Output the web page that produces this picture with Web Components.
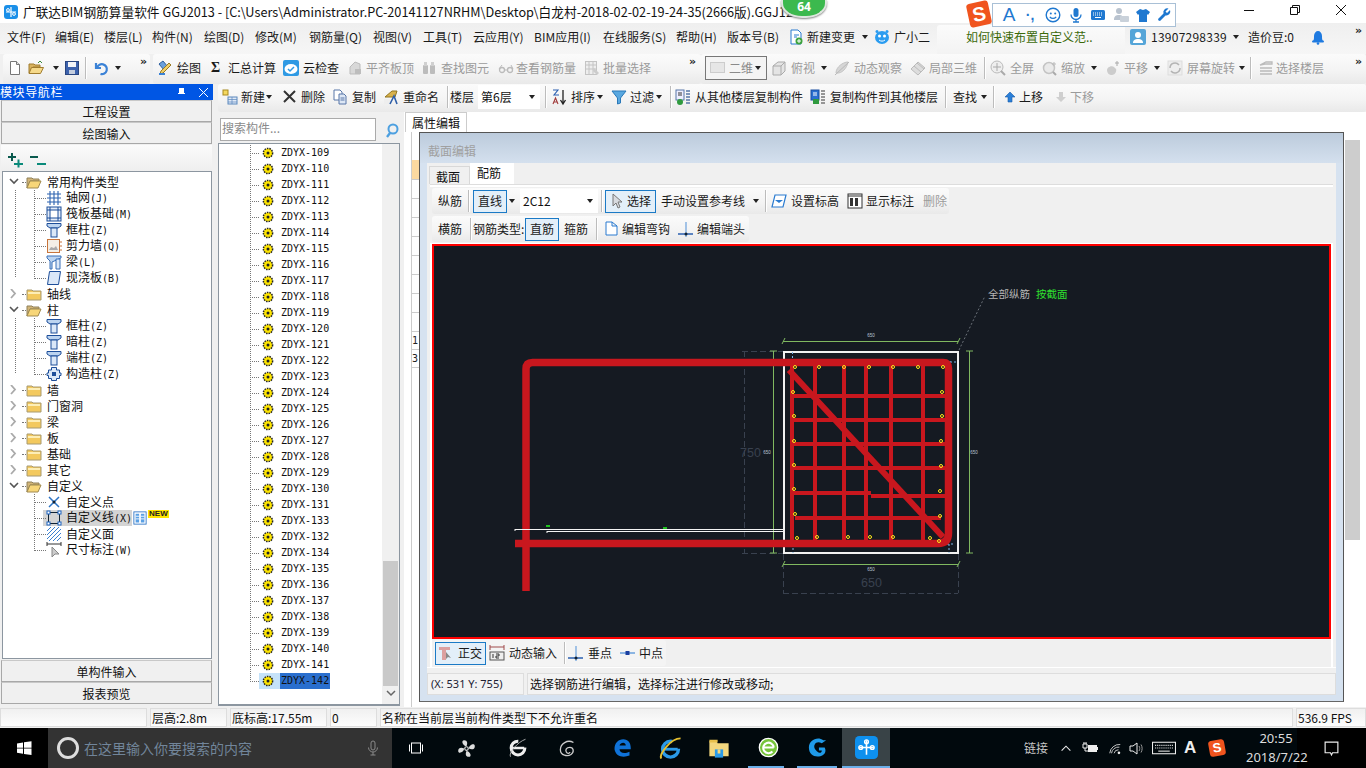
<!DOCTYPE html>
<html lang="zh">
<head>
<meta charset="utf-8">
<title>GGJ2013</title>
<style>
  html, body { margin: 0; height: 100%; overflow: hidden; background: #f0f0f0; }
  body { font: 12px/16px "Noto Sans CJK SC", "Noto Sans", sans-serif; color: #111; }
</style>
</head>
<body>
<gl-app></gl-app>
<script>
const FONT = '"Noto Sans CJK SC", "Noto Sans", sans-serif';
const MONO = '"DejaVu Sans Mono", "Liberation Mono", monospace';

// icons, 16x16 unless a vb is passed
const ICONS = {
  app: '<rect x="1" y="1" width="14" height="14" rx="3" fill="#1a8fe8"/><path d="M8 3v10M3 8h10" stroke="#fff" stroke-width="1.2" fill="none"/><circle cx="5" cy="6" r="1.4" fill="none" stroke="#fff"/><circle cx="11" cy="10" r="1.4" fill="none" stroke="#fff"/>',
  doc: '<path d="M3.5 1.5h6l3 3v10h-9z" fill="#fff" stroke="#777"/><path d="M9.5 1.5v3h3" fill="#ddd" stroke="#777"/>',
  open: '<path d="M1 13V4h5l1 1h5v2H5l-3 6z" fill="#d8b25e" stroke="#a07c2e"/><path d="M3.500 7.500h12l-3 6H1z" fill="#f5d98a" stroke="#a07c2e"/><path d="M10 3l2-2 2 2" fill="none" stroke="#3a8a3a"/>',
  save: '<rect x="1.500" y="1.500" width="13" height="13" fill="#3c62ad" stroke="#29457f"/><rect x="4" y="2" width="8" height="5" fill="#f2f4f8"/><rect x="5" y="10" width="6" height="4" fill="#c5cede"/>',
  undo: '<path d="M3 3v5h5" fill="none" stroke="#3b82d6" stroke-width="2.200"/><path d="M4 8a5 5 0 1 1 3.500 6" fill="none" stroke="#3b82d6" stroke-width="2.200"/>',
  draw: '<path d="M2 4l4-3 5 6-4 3z" fill="#6aa0dc" stroke="#2e5e9e"/><path d="M14 5L6 13l-3 1 1-3 8-8z" fill="#f0cf6a" stroke="#9a7a22"/><path d="M2 14h6" stroke="#3b82d6" stroke-width="2"/>',
  cloud: '<rect x="0" y="0" width="16" height="16" rx="2" fill="#2f9ae4"/><ellipse cx="8" cy="9" rx="6.500" ry="5" fill="#fff"/><path d="M5 9l2 2 4-4" fill="none" stroke="#2f9ae4" stroke-width="1.500"/>',
  gbox: '<path d="M3 14V7l5-5 5 2v10z" fill="#d8d8d8" stroke="#bbb"/><rect x="8" y="9" width="6" height="5" fill="#bdbdbd"/>',
  binoc: '<rect x="2" y="5" width="5" height="9" rx="1" fill="#bcbcbc"/><rect x="9" y="5" width="5" height="9" rx="1" fill="#bcbcbc"/><rect x="3" y="2" width="3" height="4" fill="#d0d0d0"/><rect x="10" y="2" width="3" height="4" fill="#d0d0d0"/>',
  glasses: '<circle cx="4" cy="10" r="2.500" fill="none" stroke="#bbb" stroke-width="1.300"/><circle cx="12" cy="10" r="2.500" fill="none" stroke="#bbb" stroke-width="1.300"/><path d="M6.500 10h3M1 9l3-4M15 9l-2-4" stroke="#bbb" fill="none"/>',
  batch: '<rect x="1.500" y="1.500" width="11" height="13" fill="#eee" stroke="#c4c4c4"/><path d="M1 5h12M1 9h12M5 1v14M9 1v14" stroke="#c4c4c4"/><path d="M10 8l5 5-2 2-4-4z" fill="#ccc"/>',
  cube: '<path d="M2 6l5-4h7v9l-4 4H2z" fill="#e4e4e4" stroke="#aaa"/><path d="M2 6h8v9M10 6l4-4" fill="none" stroke="#aaa"/>',
  orbit: '<path d="M2 13c0-6 7-11 12-11-1 6-6 12-12 11z" fill="#d6d6d6" stroke="#c4c4c4"/><path d="M1 15l14-13" stroke="#b8b8b8"/>',
  part: '<path d="M1 9l7-7 7 6-7 7z" fill="#ddd" stroke="#bbb"/><path d="M4 6l7 6M7 3l7 6" stroke="#bbb"/>',
  zoomfit: '<circle cx="7" cy="7" r="6" fill="#eee" stroke="#bbb"/><path d="M7 3v8M3 7h8" stroke="#aaa"/><path d="M11 11l4 4" stroke="#aaa" stroke-width="2"/>',
  zoom: '<circle cx="7" cy="8" r="5.500" fill="#eaeaea" stroke="#c4c4c4" stroke-width="1.500"/><path d="M11 12l3 3" stroke="#aaa" stroke-width="2"/><path d="M12 2v4M10 4h4" stroke="#bbb"/>',
  pan: '<path d="M2 10c0-3 5-5 7-3l2 2c1 2-1 6-4 6s-5-2-5-5z" fill="#ccc"/><path d="M12 1v5M10 3h4" stroke="#aaa"/>',
  rotate: '<rect x="1" y="1" width="14" height="14" fill="#eee" stroke="#ddd"/><path d="M3 8a5 5 0 0 1 9-3M13 8a5 5 0 0 1-9 3" fill="none" stroke="#b4b4b4" stroke-width="1.500"/>',
  floors: '<path d="M2 5l6-3h6v2H7zM2 8h12M2 11h12M2 14h12" stroke="#bbb" stroke-width="1.300" fill="none"/>',
  chg: '<path d="M3 1h7l3 3v11H3z" fill="#fff" stroke="#2a7bd0"/><path d="M6 6h5M6 8h3" stroke="#2a7bd0"/><circle cx="11" cy="12" r="3.500" fill="#3da33d"/><path d="M11 10v4M9 12h4" stroke="#fff"/>',
  xiao: '<ellipse cx="8" cy="8.500" rx="7" ry="6.500" fill="#2a9cf0"/><circle cx="5.500" cy="7" r="1.500" fill="#fff"/><circle cx="10.500" cy="7" r="1.500" fill="#fff"/><path d="M5 11c2 1.500 4 1.500 6 0" stroke="#fff" fill="none"/><circle cx="3" cy="2.500" r="1.500" fill="#2a9cf0"/><circle cx="13" cy="2.500" r="1.500" fill="#2a9cf0"/>',
  user: '<rect width="16" height="16" rx="2" fill="#55a5d8"/><circle cx="8" cy="6" r="3" fill="#fff"/><path d="M3 14c0-3 2-4 5-4s5 1 5 4z" fill="#fff"/>',
  bell: '<path d="M3 12c1-1 1-3 1-5 0-3 2-5 4-5s4 2 4 5c0 2 0 4 1 5z" fill="#1f7ae0"/><rect x="2" y="11.500" width="12" height="2" rx="1" fill="#1f7ae0"/><circle cx="8" cy="14.500" r="1.300" fill="#1f7ae0"/>',
  newc: '<rect x="1" y="1" width="5" height="5" fill="#f4d860" stroke="#a88a20"/><rect x="6" y="8" width="9" height="7" fill="#dfe9f6" stroke="#5b88bd"/><path d="M6 10.500h9M6 13h9M10 8v7" stroke="#5b88bd" stroke-width=".7"/>',
  del: '<path d="M2 2l11 11M13 2L2 13" stroke="#333" stroke-width="2"/>',
  copy: '<path d="M2 1h6l2 2v8H2z" fill="#fff" stroke="#5877a8"/><path d="M7 5h5l2 2v8H7z" fill="#dde7f5" stroke="#5877a8"/><path d="M8.500 9h4M8.500 11h4" stroke="#5877a8"/>',
  ren: '<path d="M2 8l7-6h5l-2 6z" fill="#d9b24c" stroke="#927620"/><rect x="1" y="10" width="6" height="5" fill="#eee"/><path d="M7 15l4-8 3 8" fill="none" stroke="#2f5fa8" stroke-width="1.600"/>',
  sort: '<path d="M2 1h5L3 6h5" fill="none" stroke="#2b5fb0" stroke-width="1.100"/><path d="M2 15l2.500-6L7 15M3 13h3" fill="none" stroke="#a03a3a" stroke-width="1.100"/><path d="M12 1v13M9.500 11l2.500 4 2.500-4" fill="none" stroke="#222" stroke-width="1.300"/>',
  filter: '<path d="M1 2h14L9.500 9v5l-3 1V9z" fill="#59a8e0" stroke="#2a78b8"/>',
  cfrom: '<rect x="1" y="1" width="8" height="10" fill="#eef" stroke="#5877a8"/><path d="M3 4h4M3 6h4" stroke="#333"/><path d="M11 2h4M11 5h4M11 8h4M11 11h4M11 14h4" stroke="#5877a8" stroke-width="1.300"/><circle cx="5" cy="13" r="3" fill="#2f9a3f"/>',
  cto: '<rect x="1" y="1" width="8" height="10" fill="#2a6fd0" stroke="#1a4f9f"/><path d="M3 4h4M3 6h4" stroke="#fff"/><path d="M11 2h4M11 5h4M11 8h4M11 11h4M11 14h4" stroke="#777" stroke-width="1.300"/><rect x="3" y="10" width="6" height="5" fill="#2f9a3f"/>',
  up: '<path d="M8 3l5 5h-3v5H6V8H3z" fill="#2a7fd8" stroke="#1a5aa8" stroke-width=".6"/>',
  down: '<path d="M6 3h4v5h3l-5 5-5-5h3z" fill="#cfcfcf"/>',
  search: '<circle cx="9" cy="7" r="4.500" fill="none" stroke="#4da0e0" stroke-width="2"/><path d="M6 11l-3 4" stroke="#4da0e0" stroke-width="2.400"/>',
  plus: '<path d="M1 5h8M5 1v8" stroke="#0a5a4e" stroke-width="2"/><path d="M7 12h9M11.500 7.500v8" stroke="#0a8a7a" stroke-width="2"/>',
  minus: '<path d="M0 5h8" stroke="#0a5a4e" stroke-width="2"/><path d="M7 12h9" stroke="#0a8a7a" stroke-width="2"/>',
  fclosed: '<path d="M1 4h5l1 1h8v9H1z" fill="#f3c95e" stroke="#a89a70"/><rect x="2" y="6" width="12" height="2" fill="#fdeeb6"/>',
  fopen: '<path d="M1 14V4h5l1 1h6v2H4z" fill="#d2b578" stroke="#8f8058"/><path d="M4 7h11l-3 7H1z" fill="#f7d679" stroke="#a08a50"/>',
  grid: '<path d="M1 4h14M1 8h14M1 12h14M4 1v14M8 1v14M12 1v14" stroke="#2c62b0" stroke-width="1.100"/>',
  raft: '<rect x="1" y="1" width="14" height="14" fill="#e4ecf8" stroke="#1d4e9a"/><rect x="4" y="4" width="8" height="8" fill="#fff" stroke="#1d4e9a"/><path d="M1 4h3M12 4h3M1 12h3M12 12h3M4 1v3M12 1v3M4 12v3M12 12v3" stroke="#1d4e9a"/>',
  column: '<path d="M1 1.500h14v2.500l-3 2H4l-3-2z" fill="#bcd4f0" stroke="#1d4e9a"/><rect x="5" y="6" width="6" height="9" fill="#dbe8f8" stroke="#1d4e9a"/>',
  wall: '<rect x="1.500" y="1.500" width="12" height="13" fill="#f4efe6" stroke="#c8753c"/><path d="M3 12l2-3 3 1 2-2 2 4z" fill="#aaa"/><path d="M14 4h2M14 8h2M14 12h2" stroke="#c8753c"/>',
  beam: '<path d="M1 2h14v2L6 8v7H4V7L1 4z" fill="#bcd4f0" stroke="#3a70b8"/><path d="M10 5h4v10h-4z" fill="#dbe8f8" stroke="#3a70b8"/>',
  slab: '<path d="M3.500 1.500h11l-2 13h-11z" fill="#dbe8f8" stroke="#1d4e9a"/>',
  cons: '<path d="M5.500 1.500h5v2.500h3v3h1.500v2.500h-1.500v3h-3v2h-5v-2h-3v-3H1V7h1.500V4h3z" fill="#dbe8f8" stroke="#1d4e9a"/><rect x="6" y="6" width="4" height="4" fill="#1d4e9a"/>',
  cpoint: '<path d="M3 3l10 10M13 3L3 13" stroke="#2d74c4" stroke-width="1.500"/><circle cx="8" cy="8" r="1.500" fill="#123"/>',
  cline: '<rect x="2.500" y="2.500" width="11" height="11" fill="none" stroke="#123"/><g fill="#fff" stroke="#1a62c0"><rect x="1" y="1" width="3" height="3"/><rect x="12" y="1" width="3" height="3"/><rect x="1" y="12" width="3" height="3"/><rect x="12" y="12" width="3" height="3"/></g>',
  cface: '<rect x="1" y="1" width="14" height="14" fill="#fff"/><path d="M1 5l4-4M1 9l8-8M1 13L13 1M3 15L15 3M7 15l8-8M11 15l4-4" stroke="#3a7fd0"/>',
  cdim: '<path d="M1 2h14M1 0v4M15 0v4" stroke="#333"/><path d="M6 5v10l3-3h4z" fill="#ccc" stroke="#888"/>',
  cols: '<rect x="1" y="1" width="14" height="14" fill="#fff" stroke="#2d74c4"/><path d="M3 3h4v10H3zM9 3h4v10H9z" fill="#5aa0e4"/><path d="M3 6h4M3 9h4M9 6h4M9 9h4" stroke="#fff"/>',
  cursor: '<path d="M4 1v12l3-3 2 5 2-1-2-5h4z" fill="#d8dbe0" stroke="#777"/>',
  setz: '<path d="M4 2h11l-3 12H1z" fill="#fff" stroke="#2a7bd0" stroke-width="1.200"/><path d="M4 7h8l-4 3z" fill="#2a7bd0"/>',
  show: '<rect x="1" y="1" width="14" height="14" fill="#fff" stroke="#333"/><rect x="3" y="5" width="3" height="8" fill="#333"/><rect x="8" y="5" width="3" height="8" fill="#333"/><path d="M1 3h14" stroke="#333"/>',
  hook: '<path d="M3 1h6v4h5v9H3z" fill="#fff" stroke="#2a7bd0"/><path d="M9 1l5 4" stroke="#2a7bd0"/>',
  endp: '<path d="M1 13h15" stroke="#2a5fb0" stroke-width="1.500"/><path d="M9 1v15" stroke="#6aa0dc" stroke-width="1.200"/><circle cx="9" cy="13" r="1.500" fill="#123"/>',
  midp: '<path d="M1 8h15" stroke="#6aa0dc" stroke-width="1.500"/><rect x="6.500" y="6" width="4" height="4" fill="#1a3fa0"/>',
  ortho: '<path d="M1 2h11v3H8v10H4V5H1z" fill="#dca0a0"/><path d="M8 7v7l2-2 3 1z" fill="#888"/>',
  dyn: '<path d="M1 2h14M1 0v5M15 0v5" stroke="#a04a4a"/><rect x="1" y="7" width="14" height="8" fill="#eee" stroke="#555"/><path d="M4 9v4M7 9h3v2H7v2h3" stroke="#333" fill="none"/>',
  // ime bar
  smile: '<circle cx="8" cy="8" r="6.800" fill="none" stroke="#1f78d0" stroke-width="1.400"/><circle cx="5.800" cy="6.500" r="1" fill="#1f78d0"/><circle cx="10.200" cy="6.500" r="1" fill="#1f78d0"/><path d="M4.800 9.800c1.800 2.200 4.600 2.200 6.400 0" fill="none" stroke="#1f78d0" stroke-width="1.300"/>',
  mic: '<rect x="5.500" y="1" width="5" height="9" rx="2.500" fill="#1f78d0"/><path d="M3 7.500a5 5 0 0 0 10 0M8 12.500v2.500M5 15h6" fill="none" stroke="#1f78d0" stroke-width="1.300"/>',
  kbd: '<rect x="1" y="3" width="14" height="10" rx="1.500" fill="#1f78d0"/><path d="M3 6h10M3 8h10" stroke="#fff" stroke-dasharray="1 1"/><path d="M5 10.500h6" stroke="#fff"/>',
  person: '<circle cx="6" cy="4" r="3" fill="#b9c3cf"/><path d="M1 13c0-4 2-5 5-5s3 1 4 2v3z" fill="#b9c3cf"/><rect x="7" y="9" width="9" height="6" rx="1" fill="#c9d1da"/>',
  shirt: '<path d="M5 2l3 1 3-1 4 3-2 3-1-1v8H4V7L3 8 1 5z" fill="#1f78d0"/>',
  wrench: '<path d="M14 3l-3 3-1.500-1.500 3-3a4 4 0 0 0-5 5L2 12a2 2 0 0 0 2 2l5.500-5.500a4 4 0 0 0 4.500-5.500z" fill="#1f78d0"/>',
  // task bar
  win: '<path d="M1 3.500l6-1v5.200H1zM8 2.300l7.500-1.100v6.500H8zM1 8.500h6v5.200l-6-1zM8 8.500h7.500v6.500L8 13.900z" fill="#fff"/>',
  tview: '<rect x="3.500" y="3" width="9" height="10" fill="none" stroke="#fff"/><path d="M1.500 4.500v7M14.500 4.500v7" stroke="#fff"/>',
  micw: '<rect x="6" y="1" width="4" height="9" rx="2" fill="none" stroke="#8a8a8a"/><path d="M3.500 7.500a4.500 4.500 0 0 0 9 0M8 12v3M5.500 15h5" fill="none" stroke="#8a8a8a"/>',
  fan: '<circle cx="8" cy="8" r="1.500" fill="none" stroke="#ddd"/><path d="M8 6C5 6 3 1 6 1s3 3 2 5zM10 8c0-3 5-5 5-2s-3 3-5 2zM8 10c3 0 5 5 2 5s-3-3-2-5zM6 8c0 3-5 5-5 2s3-3 5-2z" fill="#ddd"/>',
  iew: '<circle cx="8" cy="8" r="5.500" fill="none" stroke="#eee" stroke-width="2.400" stroke-dasharray="26 8"/><path d="M3 8h10" stroke="#eee" stroke-width="2"/><path d="M2 15C0 12 8 3 14 1" fill="none" stroke="#bbb" stroke-width=".7"/>',
  swirl: '<path d="M13 3C8 0 2 4 2 9s6 6 9 4 2-6-1-6-4 2-3 4 3 1 3 0" fill="none" stroke="#ccc" stroke-width="1.100"/>',
  edge: '<path d="M2 9c0-5 3-8 7-8s6 3 6 7v1H6c0 3 4 4 8 2v3c-5 2-11 1-12-5zM6 6h5c0-3-4-3-5 0z" fill="#0f72d8"/>',
  ie: '<circle cx="8" cy="8.500" r="5.500" fill="none" stroke="#2a9ae8" stroke-width="2.400" stroke-dasharray="27 7"/><path d="M3 8.500h10" stroke="#2a9ae8" stroke-width="2"/><path d="M1.500 15C0 12 8 1 15 1" fill="none" stroke="#e6c030" stroke-width="1.300"/>',
  explorer: '<path d="M1 3h5l1 1.500h8V14H1z" fill="#f3d77e"/><rect x="1" y="2" width="6" height="2" fill="#e8c04c"/><path d="M5 9h6v6H5z" fill="#2a9ae8"/><rect x="7" y="9" width="2" height="3" fill="#f3d77e"/>',
  gie: '<circle cx="8" cy="8" r="7" fill="#76c43a" stroke="#fff"/><path d="M4 8h8M12 8a4 4 0 1 0-1 3" fill="none" stroke="#fff" stroke-width="1.600"/>',
  gapp: '<path d="M12 3C8 0 2 3 2 8s4 7 8 6 4-4 3-6H9v2h2c0 2-2 2-3 1S5 8 6 6s3-2 5-1l3-2z" fill="#1f9ae8"/>',
  cross: '<rect x="0" y="0" width="16" height="16" rx="3" fill="#0e90ee"/><path d="M8 3v10M3 8h10" stroke="#fff" stroke-width="1.100"/><circle cx="4" cy="8" r="1.300" fill="none" stroke="#fff"/><circle cx="12" cy="8" r="1.300" fill="none" stroke="#fff"/><circle cx="8" cy="4" r="1.300" fill="none" stroke="#fff"/>',
  caret: '<path d="M3 11l5-5 5 5" fill="none" stroke="#eee" stroke-width="1.200"/>',
  batt: '<path d="M1 4h4v4H1zM2 2v2M4 2v2M3 8v3h3" stroke="#eee" fill="none"/><rect x="6" y="5" width="9" height="7" fill="#eee"/><rect x="15" y="7" width="1" height="3" fill="#eee"/>',
  wifi: '<path d="M2 14a11 11 0 0 1 12-10M4 14a8 8 0 0 1 9-7M7 14a5 5 0 0 1 5-4" fill="none" stroke="#ddd"/><circle cx="12.500" cy="13.500" r="1.500" fill="#eee"/>',
  vol: '<path d="M2 6h3l4-3v11L5 11H2z" fill="none" stroke="#eee"/><path d="M11 6c1 1.500 1 3.500 0 5M13 4.500c1.500 2.500 1.500 5.500 0 8" fill="none" stroke="#999"/>',
  kbw: '<rect x=".5" y="2.500" width="22" height="11" fill="none" stroke="#eee"/><path d="M3 5.500h17M3 8h17" stroke="#eee" stroke-dasharray="1 1"/><path d="M6 11h11" stroke="#eee"/>',
  note: '<path d="M2 2h12v10H9l-1 2-1-2H2z" fill="none" stroke="#eee" stroke-width="1.100"/>'
};

class GlIcon extends HTMLElement {
  connectedCallback() {
    const s = this.getAttribute('s') || 16;
    const h = this.getAttribute('h') || s;
    const vb = this.getAttribute('vb') || '0 0 16 16';
    const root = this.shadowRoot || this.attachShadow({ mode: 'open' });
    root.innerHTML = `<style>:host{display:inline-block;width:${s}px;height:${h}px;flex:none;line-height:0}svg{display:block;overflow:visible}</style>
      <svg width="${s}" height="${h}" viewBox="${vb}">${ICONS[this.getAttribute('name')] || ''}</svg>`;
  }
}

// one toolbar item: optional icon, then the label in the slot
class GlTool extends HTMLElement {
  connectedCallback() {
    const icon = this.getAttribute('icon');
    const iw = this.getAttribute('iw') || 0;
    const root = this.shadowRoot || this.attachShadow({ mode: 'open' });
    root.innerHTML = `<style>
      :host{display:inline-flex;align-items:center;height:100%;flex:none;box-sizing:border-box;white-space:nowrap;color:#1a1a1a;overflow:visible}
      :host([off]){color:#9b9b9b}
      :host([on]){height:23px;background:#e3eff9;outline:1px solid #1b7ac6;outline-offset:-1px}
      .i{width:${iw}px;flex:none;display:flex;align-items:center}
    </style>${icon ? `<span class="i"><gl-icon name="${icon}"></gl-icon></span>` : ''}<slot></slot>`;
  }
}

const DROP = '<span style="display:block;width:0;height:0;border:3px solid transparent;border-top:4px solid #222;border-bottom:0"></span>';
const MORE = '<span style="font:bold 11px/10px \'DejaVu Sans\',sans-serif;letter-spacing:-1px;color:#222;position:relative;top:-6px">»</span>';

// items are [x, kind or icon, labelX, label, flags]; the flow widths come from the next x
function bar(start, end, items) {
  let html = '';
  items.forEach((it, i) => {
    const x = it[0];
    const next = i + 1 < items.length ? items[i + 1][0] : end;
    const w = next - x;
    const kind = it[1];
    const first = i === 0 ? `margin-left:${x - start}px;` : '';
    if (kind === 'sep') {
      html += `<span style="${first}width:${w}px;flex:none;display:flex;align-items:center"><span style="width:1px;height:22px;background:#bcbcbc;box-shadow:1px 0 #fff"></span></span>`;
    } else if (kind === 'drop') {
      html += `<span style="${first}width:${w}px;flex:none;display:flex;align-items:center">${DROP}</span>`;
    } else if (kind === 'more') {
      html += `<span style="${first}width:${w}px;flex:none;display:flex;align-items:center">${MORE}</span>`;
    } else if (kind === 'sigma') {
      html += `<gl-tool style="${first}width:${w}px"><span style="width:${it[2] - x}px;font:bold 14px 'Liberation Serif',serif;flex:none">Σ</span>${it[3]}</gl-tool>`;
    } else if (kind === 'combo') {
      const cw = it[4];
      html += `<span style="${first}width:${cw}px;margin-right:${w - cw}px;height:${it[5] || 24}px;flex:none;background:#fff;display:flex;align-items:center;justify-content:space-between;padding:0 5px 0 3px;box-sizing:border-box;white-space:nowrap;${it[6] || ''}">${it[3]}${DROP}</span>`;
    } else {
      const f = it[4] || '';
      const bw = it[5];
      const pad = it[6] ? `padding-left:${it[6]}px;` : '';
      const size = bw ? `width:${bw}px;margin-right:${w - bw}px;` : `width:${w}px;`;
      const attr = kind ? `icon="${kind}" iw="${it[2] - x - (it[6] || 0)}"` : '';
      html += `<gl-tool ${attr} ${f} style="${first}${size}${pad}">${it[3] || ''}</gl-tool>`;
    }
  });
  return html;
}

class GlSeg extends HTMLElement {
  connectedCallback() {
    const root = this.shadowRoot || this.attachShadow({ mode: 'open' });
    root.innerHTML = `<style>
      :host{display:flex;align-items:center;flex:none;box-sizing:border-box;height:100%;overflow:visible;
        background:linear-gradient(#fbfbfb,#f4f4f4 55%,#e9e9e9);border-radius:3px}
    </style><slot></slot>`;
  }
}

class GlTitlebar extends HTMLElement {
  constructor() {
    super();
    this.attachShadow({ mode: 'open' }).innerHTML = `<style>
      :host{display:flex;align-items:center;height:23px;background:#fff;position:relative;font-size:12.7px}
      .t{margin-left:4px;white-space:nowrap;color:#111;line-height:24px}
      .w{position:absolute;top:0;right:2px;display:flex}
      .w span{width:46px;height:20px;display:flex;align-items:center;justify-content:center}
    </style>
    <gl-icon name="app" s="16" style="margin-left:3px"></gl-icon>
    <span class="t">广联达BIM钢筋算量软件 GGJ2013 - [C:\\Users\\Administrator.PC-20141127NRHM\\Desktop\\白龙村-2018-02-02-19-24-35(2666版).GGJ12</span>
    <div class="w">
      <span><svg width="10" height="10"><path d="M0 5.500h10" stroke="#111"/></svg></span>
      <span><svg width="10" height="10"><path d="M.5 2.500h7v7h-7zM2.500 2.500v-2h7v7h-2" fill="none" stroke="#111"/></svg></span>
      <span><svg width="10" height="10"><path d="M0 0l10 10M10 0L0 10" stroke="#111"/></svg></span>
    </div>`;
  }
}

class GlMenubar extends HTMLElement {
  constructor() {
    super();
    const m = [[7,'文件(F)'],[55,'编辑(E)'],[104,'楼层(L)'],[152,'构件(N)'],[204,'绘图(D)'],[255,'修改(M)'],[309,'钢筋量(Q)'],[373,'视图(V)'],[423,'工具(T)'],[473,'云应用(Y)'],[534,'BIM应用(I)'],[603,'在线服务(S)'],[676,'帮助(H)'],[727,'版本号(B)']]
      .map(a => [a[0], '', a[0], a[1]]);
    m.push([788,'chg',807,'新建变更'],[862,'drop'],[874,'xiao',894,'广小二']);
    this.attachShadow({ mode: 'open' }).innerHTML = `<style>
      :host{display:flex;height:31px;background:linear-gradient(#efefef,#f6f6f6);align-items:center;overflow:hidden}
      .l{display:flex;align-items:center;height:100%;width:937px;flex:none;box-sizing:border-box;padding-bottom:3px}
      .tab{width:188px;height:29px;margin-top:2px;flex:none;box-sizing:border-box;padding-left:29px;line-height:24px;color:#3c6a0a;background:linear-gradient(#fbfbfb,#f3f3f3);border-radius:3px 3px 0 0}
      .r{display:flex;align-items:center;height:100%;box-sizing:border-box;padding-bottom:3px}
    </style>
    <div class="l">${bar(0, 937, m)}</div>
    <div class="tab">如何快速布置自定义范..</div>
    <div class="r">${bar(1125, 1366, [[1130,'user',1151,'<span style="letter-spacing:.25px">13907298339</span>'],[1233,'drop'],[1248,'',1248,'造价豆:0'],[1310,'bell',1330,''],[1355,'more']])}</div>`;
  }
}

class GlToolbar extends HTMLElement {
  constructor() {
    super();
    const a = bar(3, 150, [[7,'doc',25,''],[28,'open',52,''],[53,'drop'],[64,'save',84,''],[85,'sep'],[93,'undo',114,''],[115,'drop'],[140,'more']]);
    const b = bar(153, 701, [[157,'draw',177,'绘图'],[211,'sigma',228,'汇总计算'],[283,'cloud',303,'云检查'],[347,'gbox',366,'平齐板顶','off'],[421,'binoc',441,'查找图元','off'],[498,'glasses',516,'查看钢筋量','off'],[584,'batch',603,'批量选择','off'],[689,'more']]);
    const c = bar(701, 1366, [[705,'combo',0,'<span style="display:flex;align-items:center;gap:4px;color:#8a8a8a;margin-left:1px"><span style="width:13px;height:9px;background:#e6e6e6;border:1px solid #ccc"></span>二维</span>',62,24,'border:1px solid #777;background:#f4f4f4'],[771,'cube',791,'俯视','off'],[821,'drop'],[834,'orbit',854,'动态观察','off'],[910,'part',929,'局部三维','off'],[984,'sep'],[990,'zoomfit',1010,'全屏','off'],[1042,'zoom',1061,'缩放','off'],[1091,'drop'],[1105,'pan',1124,'平移','off'],[1154,'drop'],[1167,'rotate',1187,'屏幕旋转','off'],[1239,'drop'],[1250,'sep'],[1258,'floors',1276,'选择楼层','off'],[1355,'more']]);
    this.attachShadow({ mode: 'open' }).innerHTML = `<style>
      :host{display:flex;height:30px;background:#f0f0f0;box-sizing:border-box;padding:0 0 0 3px;gap:3px;overflow:hidden}
      gl-seg{width:147px;padding-bottom:3px} .b{width:548px} .c{flex:1}
    </style>
    <gl-seg>${a}</gl-seg><gl-seg class="b">${b}</gl-seg><gl-seg class="c" style="margin-left:-3px">${c}</gl-seg>`;
  }
}

class GlNavBtn extends HTMLElement {
  constructor() {
    super();
    this.attachShadow({ mode: 'open' }).innerHTML = `<style>
      :host{display:block;height:22px;box-sizing:border-box;margin:0 1px 0 1px;text-align:center;line-height:21px;background:#f0f0f0;border:1px solid #a8a8a8;border-top-color:#c8c8c8}
    </style><slot></slot>`;
  }
}

const DOTS = 'repeating-linear-gradient(#777 0 1px,transparent 1px 2px)';

// tree row of the left navigator
class GlTreeRow extends HTMLElement {
  connectedCallback() {
    const lv = +this.getAttribute('lv');
    const label = (this.getAttribute('label') || '').replace(/[\x00-\x7f]+/g, m => `<span class="m">${m}</span>`);
    const ch = this.getAttribute('ch');
    const h = this.hasAttribute('end') ? 8 : 16;
    const bgs = [];
    if (this.hasAttribute('sel')) bgs.push('linear-gradient(#d4d4d4,#d4d4d4) 40px 0/89px 100% no-repeat');
    if (this.hasAttribute('v1')) bgs.push(`${DOTS} 12px 0/1px ${h}px no-repeat`);
    if (lv > 0) bgs.push(`${DOTS} 31px 0/1px ${h}px no-repeat`);
    const chev = ch === 'open'
      ? '<path d="M1 2l4 4 4-4" fill="none" stroke="#555" stroke-width="1.600"/>'
      : '<path d="M2 0l4 4.500L2 9" fill="none" stroke="#aaa" stroke-width="1.800"/>';
    const head = lv === 0
      ? `<svg class="c" width="10" height="10">${chev}</svg><span class="d" style="width:4px"></span><gl-icon name="${this.getAttribute('icon')}"></gl-icon><span class="x" style="margin-left:5px">${label}</span>`
      : `<span style="width:31px;flex:none"></span><span class="d" style="width:12px"></span><gl-icon name="${this.getAttribute('icon')}"></gl-icon><span class="x">${label}</span>`;
    (this.shadowRoot || this.attachShadow({ mode: 'open' })).innerHTML = `<style>
      :host{display:flex;align-items:center;height:16px;white-space:nowrap;padding-left:${lv === 0 ? 6 : 0}px;${bgs.length ? 'background:' + bgs.join(',') : ''}}
      .c{flex:none;margin-right:3px}
      .d{flex:none;height:0;border-top:1px dotted #777}
      .x{margin-left:4px;line-height:16px}
      .m{font:10px/16px ${MONO}}
    </style>${head}<slot></slot>`;
  }
}

class GlNav extends HTMLElement {
  constructor() {
    super();
    // label, level, icon, chevron, flags for the dotted guides
    const R = [
      ['常用构件类型',0,'fopen','open'],['轴网(J)',1,'grid','','v1'],['筏板基础(M)',1,'raft','','v1'],['框柱(Z)',1,'column','','v1'],['剪力墙(Q)',1,'wall','','v1'],['梁(L)',1,'beam','','v1'],['现浇板(B)',1,'slab','','v1 end'],
      ['轴线',0,'fclosed','shut'],['柱',0,'fopen','open'],['框柱(Z)',1,'column','','v1'],['暗柱(Z)',1,'column','','v1'],['端柱(Z)',1,'column','','v1'],['构造柱(Z)',1,'cons','','v1 end'],
      ['墙',0,'fclosed','shut'],['门窗洞',0,'fclosed','shut'],['梁',0,'fclosed','shut'],['板',0,'fclosed','shut'],['基础',0,'fclosed','shut'],['其它',0,'fclosed','shut'],
      ['自定义',0,'fopen','open'],['自定义点',1,'cpoint'],['自定义线(X)',1,'cline'],['自定义面',1,'cface'],['尺寸标注(W)',1,'cdim','','end']
    ];
    const rows = R.map(r => {
      const sel = r[0] === '自定义线(X)';
      const extra = sel ? '<gl-icon name="cols" s="14" style="margin-left:1px"></gl-icon><span style="font:bold 8px/8px \'Liberation Sans\',sans-serif;background:#ffe600;color:#222;margin:-9px 0 0 1px;padding:0 1px">NEW</span>' : '';
      return `<gl-tree-row lv="${r[1]}" icon="${r[2]}" ${r[3] ? `ch="${r[3]}"` : ''} label="${r[0]}" ${r[4] || ''} ${sel ? 'sel' : ''}>${extra}</gl-tree-row>`;
    }).join('');
    this.attachShadow({ mode: 'open' }).innerHTML = `<style>
      :host{display:flex;flex-direction:column;width:213px;flex:none;background:#f0f0f0;overflow:hidden;padding-bottom:3px;box-sizing:border-box}
      .h{height:16px;background:#0056e4;color:#fff;display:flex;align-items:center;line-height:14px;letter-spacing:.6px}
      .h b{font-weight:400;flex:1}
      .tb{height:26px;display:flex;align-items:center;gap:7px;padding:3px 0 0 6px;box-sizing:border-box;background:linear-gradient(#fbfbfb,#eee);margin:1px 1px 0}
      .tree{flex:1;margin:0 1px 0 2px;background:#fff;border:1px solid #8c96a0;box-sizing:border-box;padding-top:2px;overflow:hidden}
    </style>
    <div class="h"><b>模块导航栏</b>
      <svg width="11" height="11" style="margin-right:12px"><path d="M3 1h5v5h1v1H2V6h1zM5.500 7v4" fill="#fff"/></svg>
      <svg width="9" height="9" style="margin-right:5px"><path d="M0 0l9 9M9 0L0 9" stroke="#fff"/></svg></div>
    <gl-nav-btn>工程设置</gl-nav-btn><gl-nav-btn>绘图输入</gl-nav-btn>
    <div class="tb"><gl-icon name="plus"></gl-icon><gl-icon name="minus"></gl-icon></div>
    <div class="tree">${rows}</div>
    <gl-nav-btn style="margin-top:1px">单构件输入</gl-nav-btn><gl-nav-btn>报表预览</gl-nav-btn>`;
  }
}

class GlListRow extends HTMLElement {
  connectedCallback() {
    const sel = this.hasAttribute('sel');
    const h = this.hasAttribute('last') ? 8 : 16;
    (this.shadowRoot || this.attachShadow({ mode: 'open' })).innerHTML = `<style>
      :host{display:flex;align-items:center;height:16px;white-space:nowrap;padding-left:31px;
        background:${DOTS} 31px 0/1px ${h}px no-repeat}
      .d{width:9px;flex:none;border-top:1px dotted #777}
      .hl{display:flex;align-items:center;height:16px;padding-left:3px;${sel ? 'background:#c5e2f9;' : ''}}
      svg{flex:none;display:block}
      .n{font:10px/16px ${MONO};margin-left:6px;padding:0 1px;color:#111;${sel ? 'background:#2a6fce;' : ''}}
    </style>
    <span class="d"></span>
    <span class="hl"><svg width="12" height="12"><circle cx="6" cy="6" r="4.600" fill="#ffe600" stroke="#222" stroke-width="1.500" stroke-dasharray="1.500 1"/><circle cx="6" cy="6" r="1.500" fill="#222"/></svg><span class="n"><slot></slot></span></span>`;
  }
}

class GlList extends HTMLElement {
  constructor() {
    super();
    const names = [];
    for (let i = 109; i <= 131; i++) names.push(i);
    names.push(133, 132);
    for (let i = 134; i <= 142; i++) names.push(i);
    const rows = names.map(n => `<gl-list-row ${n === 142 ? 'sel last' : ''}>ZDYX-${n}</gl-list-row>`).join('');
    this.attachShadow({ mode: 'open' }).innerHTML = `<style>
      :host{display:flex;flex-direction:column;width:182px;flex:none;background:#f0f0f0;overflow:hidden}
      .s{height:31px;flex:none;display:flex;align-items:center;padding-left:2px;gap:6px;box-sizing:border-box;padding-top:6px;padding-bottom:2px}
      .s span{width:156px;height:23px;box-sizing:border-box;background:#fff;border:1px solid #aaa;line-height:17px;padding-left:1px;color:#8a8a8a;font-size:12px}
      .b{flex:1;display:flex;background:#fff;border:1px solid #8c96a0;border-bottom-width:2px;box-sizing:border-box;overflow:hidden;margin-bottom:1px;min-height:0}
      .rows{flex:1;padding-top:1px}
      .bar{width:17px;flex:none;background:#f0f0f0;display:flex;flex-direction:column;padding-top:417px;box-sizing:border-box}
      .bar i{display:block;width:15px;height:125px;background:#c9c9c9;margin-left:1px}
      .bar svg{display:block;margin:3px 0 0 4px}
    </style>
    <div class="s"><span>搜索构件...</span><gl-icon name="search" style="margin-left:2px"></gl-icon></div>
    <div class="b"><div class="rows">${rows}</div><div class="bar"><i></i><svg width="10" height="10"><path d="M1 2l4 4 4-4" fill="none" stroke="#666" stroke-width="1.500"/></svg></div></div>`;
  }
}

// the section drawing, coordinates are the ones of the screen
class GlCanvas extends HTMLElement {
  constructor() {
    super();
    const RED = '#c8171e';
    const bars = [790, 813, 842, 864, 889, 921].map(x => `<rect x="${x}" y="366" width="4" height="175"/>`).join('');
    const hbars = [[394,791,945],[418,791,945],[442,791,945],[466,791,945],[491,791,871],[494,871,945],[516,795,941]]
      .map(h => `<rect x="${h[1]}" y="${h[0]}" width="${h[2] - h[1]}" height="4"/>`).join('');
    const dots = [[795,367],[819,367],[844,367],[869,367],[893,367],[918,367],[943,367],[793,392],[794,416],[794,441],[794,465],[794,489],[795,514],[797,538],[817,537],[848,537],[870,537],[893,537],[930,538],[939,541],[942,392],[942,416],[941,441],[941,466],[940,491],[940,516]]
      .map(d => `<circle cx="${d[0]}" cy="${d[1]}" r="1.500"/>`).join('');
    const tiny = [[871,337],[871,571],[767,454],[974,454]]
      .map(p => `<text x="${p[0]}" y="${p[1]}" font-size="4.500" fill="#b9c4d4" text-anchor="middle" font-family="Liberation Sans">650</text>`).join('');
    this.attachShadow({ mode: 'open' }).innerHTML = `<style>
      :host{display:block;height:395px;box-sizing:border-box;border:2px solid #f00;background:#151a22;overflow:hidden;flex:none}
      svg{display:block}
    </style>
    <svg width="896" height="391" viewBox="434 246 896 391">
      <g fill="none" stroke="#39414f" stroke-dasharray="6 3">
        <path d="M744.500 351v202M742 351.500h41M742 553.500h41M783.500 554v39M958.500 554v39M783 593.500h175"/>
      </g>
      <g fill="none" stroke="#80b860">
        <path d="M783 341.500h175M773.500 351v202M969.500 351v202M783 564.500h175"/>
        <path d="M785 338l-3 6M960 338l-3 6M785 561l-3 6M960 561l-3 6M770 351h7M966 351h7M770 553h7M966 553h7"/>
      </g>
      <path d="M959 350l26-54" fill="none" stroke="#6a7078" stroke-dasharray="2 2"/>
      <text x="988" y="298" font-size="10.500" fill="#b5b5b5" font-family="Noto Sans CJK SC">全部纵筋</text>
      <text x="1036" y="298" font-size="10.500" fill="#2fe02f" font-family="Noto Sans CJK SC">按截面</text>
      <text x="740" y="457" font-size="12.500" fill="#39414f" font-family="Liberation Sans">750</text>
      <text x="861" y="587" font-size="12.500" fill="#39414f" font-family="Liberation Sans">650</text>
      ${tiny}
      <rect x="784" y="352" width="174" height="201" fill="none" stroke="#f2f2f2" stroke-width="2"/>
      <path d="M792.500 352v7M950 361v7M950 362h8M793 548v5M947 544h8M949 544v9" fill="none" stroke="#7fb6e8" stroke-dasharray="2 2"/>
      <g fill="${RED}">${bars}${hbars}</g>
      <path d="M789 370L943 537" stroke="${RED}" stroke-width="6" fill="none"/>
      <path d="M526 591V369q0-6.500 6.500-6.500H943q5.500 0 5.500 6V533q0 10.500-10.500 10.500H515" fill="none" stroke="${RED}" stroke-width="7.500"/>
      <path d="M515 529.500h268M547 531.500h236M515 529v2M547 531v2" fill="none" stroke="#f4f4f4"/>
      <rect x="546" y="525" width="4" height="2" fill="#1fc01f"/><rect x="663" y="527" width="4" height="2" fill="#1fc01f"/>
      <g fill="none" stroke="#ffe81a">${dots}</g>
    </svg>`;
  }
}

class GlDialog extends HTMLElement {
  constructor() {
    super();
    const r1 = bar(432, 950, [[438,'',438,'纵筋'],[468,'sep'],[473,'',0,'<span style="margin-left:5px">直线</span>','on',34],[509,'drop'],[520,'combo',0,'2C12',78,24],[601,'sep'],[605,'cursor',627,'选择','on',51,4],[661,'',661,'手动设置参考线'],[753,'drop'],[765,'sep'],[771,'setz',791,'设置标高'],[847,'show',866,'显示标注'],[923,'',923,'删除','off']]);
    const r2 = bar(432, 750, [[438,'',438,'横筋'],[470,'sep'],[473,'',473,'钢筋类型:'],[525,'',0,'<span style="margin-left:5px">直筋</span>','on',34],[564,'',564,'箍筋'],[596,'sep'],[603,'hook',622,'编辑弯钩'],[677,'endp',697,'编辑端头']]);
    const r3 = bar(432, 665, [[433,'ortho',456,'正交','on',51,3],[487,'dyn',507,'动态输入'],[562,'sep'],[565,'endp',586,'垂点'],[617,'midp',637,'中点']]);
    this.attachShadow({ mode: 'open' }).innerHTML = `<style>
      :host{display:flex;flex-direction:column;width:925px;height:570px;flex:none;box-sizing:border-box;border:1px solid #555;border-bottom:1px solid #666;background:#d6e2f0}
      .title{height:30px;flex:none;background:linear-gradient(#bccbdc,#d4e0ee);color:#a0a0a0;line-height:36px;padding-left:8px}
      .body{flex:1;margin:0 7px 7px;background:#f0f0f0;display:flex;flex-direction:column;min-height:0}
      .tabs{height:21px;display:flex;padding-left:2px;flex:none;align-items:flex-end}
      .tabs span{display:block;box-sizing:border-box}
      .t1{width:41px;height:18px;line-height:19px;padding-left:6px;background:#f0f0f0;border:1px solid #d8d8d8;border-bottom:0}
      .t2{width:44px;height:21px;line-height:20px;padding-left:7px;background:#fff}
      .panel{margin:0 3px;flex:none;height:483px;border-top:1px solid #ddd;box-sizing:border-box;padding:0 2px;background:#fff;display:flex;flex-direction:column}
      .row{height:28px;flex:none;display:flex;align-items:center;background:#f0f0f0;margin:0 -2px;padding:0 2px}
      .row gl-seg{height:26px}
      .r1{width:517px}.r2{width:317px}
      gl-canvas{margin-top:1px}
      .r3{height:28px;margin:0}
      .r3 gl-seg{width:232px;height:26px;background:#f4f4f4}
      .foot{flex:1;display:flex;gap:3px;padding:5px 0 0;background:#f0f0f0;box-sizing:border-box;border-top:1px solid #fff}
      .foot span{display:block;height:22px;line-height:20px;background:#f3f3f3;border:1px solid #ddd;box-sizing:border-box;padding-left:2px}
      .xy{width:97px;font:11px/20px "Noto Sans",sans-serif;color:#223;padding-left:3px}
      .foot .xy{padding-left:3px}
      .msg{flex:1}
    </style>
    <div class="title">截面编辑</div>
    <div class="body">
      <div class="tabs"><span class="t1">截面</span><span class="t2">配筋</span></div>
      <div class="panel">
        <div class="row" style="margin-top:2px"><gl-seg class="r1">${r1}</gl-seg></div>
        <div class="row"><gl-seg class="r2">${r2}</gl-seg></div>
        <gl-canvas></gl-canvas>
        <div class="row r3"><gl-seg>${r3}</gl-seg></div>
      </div>
      <div class="foot"><span class="xy">(X: 531 Y: 755)</span><span class="msg">选择钢筋进行编辑，选择标注进行修改或移动;</span></div>
    </div>`;
  }
}

class GlProps extends HTMLElement {
  constructor() {
    super();
    const ticks = [['#fbd9a0',20,'']];
    for (let i = 0; i < 8; i++) ticks.push(['#fff',19,'']);
    ticks.push(['#fff',18,'1'],['#fff',18,'3']);
    this.attachShadow({ mode: 'open' }).innerHTML = `<style>
      :host{display:flex;flex-direction:column;flex:1;background:#fff;min-width:0;overflow:hidden}
      .tabs{height:20px;flex:none;padding-left:1px;display:flex;background:#fff}
      .tabs span{width:62px;text-align:center;line-height:20px;border:1px solid #ccc;border-bottom:0;box-sizing:border-box}
      .main{flex:1;display:flex;min-height:0}
      .strip{width:8px;margin-left:7px;flex:none;border-left:1px solid #ccc;padding-top:28px;box-sizing:border-box}
      .strip div{border-bottom:1px solid #ccc;font:10px/18px ${MONO};color:#222;overflow:hidden;box-sizing:border-box}
      .sb{width:22px;flex:none;padding:8px 6px 0 1px;box-sizing:border-box}
      .sb i{display:block;height:400px;background:#cdcdcd}
    </style>
    <div class="tabs"><span>属性编辑</span></div>
    <div class="main">
      <div class="strip">${ticks.map(t => `<div style="height:${t[1]}px;background:${t[0]}">${t[2]}</div>`).join('')}</div>
      <gl-dialog></gl-dialog>
      <div class="sb"><i></i></div>
    </div>`;
  }
}

class GlStatus extends HTMLElement {
  constructor() {
    super();
    const m = s => `<span style="font:10px/18px ${MONO}">${s}</span>`;
    this.attachShadow({ mode: 'open' }).innerHTML = `<style>
      :host{display:flex;height:21px;gap:3px;background:#f0f0f0;box-sizing:border-box;padding-top:1px;white-space:nowrap}
      span.c{display:block;height:19px;line-height:18px;background:linear-gradient(#f0f0f0,#fdfdfd);border:1px solid #ddd;box-sizing:border-box;padding-left:1px;overflow:hidden;flex:none}
    </style>
    <span class="c" style="width:147px"></span>
    <span class="c" style="width:77px">层高${m(':2.8m')}</span>
    <span class="c" style="width:97px">底标高${m(':17.55m')}</span>
    <span class="c" style="width:47px">${m('0')}</span>
    <span class="c" style="width:913px">名称在当前层当前构件类型下不允许重名</span>
    <span class="c" style="width:70px">${m('536.9 FPS')}</span>`;
  }
}

class GlTaskbar extends HTMLElement {
  constructor() {
    super();
    this.attachShadow({ mode: 'open' }).innerHTML = `<style>
      :host{display:flex;height:40px;background:#01090d;color:#eee;align-items:stretch;overflow:hidden;position:relative}
      .start{width:48px;background:#000;display:flex;align-items:center;justify-content:center;flex:none}
      .search{width:344px;background:#333;flex:none;display:flex;align-items:center;padding-left:9px;box-sizing:border-box;font-size:14px;color:#71859a}
      .ring{width:16px;height:16px;border:3px solid #ddd;border-radius:50%;margin-right:5px;flex:none}
      .search gl-icon{margin-left:auto;margin-right:11px}
      .a{display:flex;align-items:center;justify-content:center;flex:none;height:40px;box-sizing:border-box}
      .u{border-bottom:2px solid #6aaee8}
      .act{background:#394347}
      .tray{flex:1;display:flex;align-items:center;min-width:0;position:relative;z-index:1}
      .lbl{color:#c8c8c8;margin-left:134px;font-size:12px}
      .t{width:60px;margin-left:auto;margin-right:-9px;text-align:center;font:13px/19px "Noto Sans",sans-serif;color:#ddd;flex:none}
      .n{width:69px;height:40px;background:#000;flex:none;display:flex;align-items:center;justify-content:center}
      .sg{width:16px;height:16px;background:#f0541e;color:#fff;border-radius:3px;font:bold 13px/16px "Liberation Sans",sans-serif;text-align:center;transform:rotate(-10deg);flex:none}
      .A{font:bold 17px/20px "Liberation Sans",sans-serif;color:#eee;flex:none}
    </style>
    <div class="start"><gl-icon name="win" s="16"></gl-icon></div>
    <div class="search"><span class="ring"></span>在这里输入你要搜索的内容<gl-icon name="micw" s="16"></gl-icon></div>
    <span class="a" style="width:48px"><gl-icon name="tview" s="16"></gl-icon></span>
    <span class="a" style="width:52px"><gl-icon name="fan" s="19"></gl-icon></span>
    <span class="a" style="width:52px"><gl-icon name="iew" s="20"></gl-icon></span>
    <span class="a" style="width:46px"><gl-icon name="swirl" s="19"></gl-icon></span>
    <span class="a" style="width:48px;margin-left:8px"><gl-icon name="edge" s="20"></gl-icon></span>
    <span class="a" style="width:48px"><gl-icon name="ie" s="23"></gl-icon></span>
    <span class="a" style="width:48px;margin-left:1px"><gl-icon name="explorer" s="22"></gl-icon></span>
    <span class="a u" style="width:36px;margin-left:5px"><gl-icon name="gie" s="21" style="margin-left:4px"></gl-icon></span>
    <span class="a u" style="width:40px;margin-left:13px"><gl-icon name="gapp" s="23"></gl-icon></span>
    <span class="a u act" style="width:48px;margin-left:5px"><gl-icon name="cross" s="23"></gl-icon></span>
    <div class="tray">
      <span class="lbl">链接</span>
      <gl-icon name="caret" s="14" style="margin-left:11px"></gl-icon>
      <gl-icon name="batt" s="16" style="margin-left:9px"></gl-icon>
      <gl-icon name="wifi" s="14" style="margin-left:10px"></gl-icon>
      <gl-icon name="vol" s="16" style="margin-left:6px"></gl-icon>
      <gl-icon name="kbw" s="24" vb="0 0 23 16" style="margin-left:8px"></gl-icon>
      <span class="A" style="margin-left:8px">A</span>
      <span class="sg" style="margin-left:13px">S</span>
      <div class="t">20:55<br>2018/7/22</div>
    </div>
    <div class="n"><gl-icon name="note" s="17"></gl-icon></div>`;
  }
}

// floating things over the title bar
class GlIme extends HTMLElement {
  constructor() {
    super();
    const at = (w, inner) => `<span style="width:${w}px;display:flex;justify-content:center;align-items:center;flex:none">${inner}</span>`;
    this.attachShadow({ mode: 'open' }).innerHTML = `<style>
      :host{position:absolute;left:968px;top:2px;height:25px;width:207px;display:flex;align-items:center}
      .s{position:absolute;left:0;top:0;width:22px;height:24px;background:#f0541e;border-radius:3px;transform:rotate(-12deg);color:#fff;font:bold 20px/24px "Liberation Sans",sans-serif;text-align:center}
      .box{margin-left:24px;flex:1;height:24px;box-sizing:border-box;background:#fff;border:1px solid #a9c0d6;display:flex;align-items:center;padding-left:6px}
      .A{font:19px/20px "Liberation Sans",sans-serif;color:#1f78d0}
      .p{font:bold 14px/14px "Liberation Sans",sans-serif;color:#1f78d0}
    </style>
    <div class="box">
      ${at(20, '<span class="A">A</span>')}${at(22, '<span class="p">·,</span>')}
      ${at(24, '<gl-icon name="smile"></gl-icon>')}${at(22, '<gl-icon name="mic"></gl-icon>')}
      ${at(22, '<gl-icon name="kbd"></gl-icon>')}${at(24, '<gl-icon name="person"></gl-icon>')}
      ${at(20, '<gl-icon name="shirt"></gl-icon>')}${at(22, '<gl-icon name="wrench"></gl-icon>')}
    </div>
    <div class="s">S</div>`;
  }
}

// the bottom of a green round badge, the rest of it is off the screen
class GlBadge extends HTMLElement {
  constructor() {
    super();
    this.attachShadow({ mode: 'open' }).innerHTML = `<style>
      :host{position:absolute;left:781px;top:0;width:42px;height:16px;border-radius:0 0 21px 21px/0 0 15px 15px;background:#3cb94e;border:2px solid #dfe6df;border-top:0;box-shadow:0 1px 2px #888;color:#fff;font:bold 12px/14px "Noto Sans",sans-serif;text-align:center;box-sizing:content-box}
    </style>64`;
  }
}

class GlApp extends HTMLElement {
  constructor() {
    super();
    const row = bar(218, 1366, [[222,'newc',241,'新建'],[266,'drop'],[282,'del',301,'删除'],[332,'copy',352,'复制'],[383,'ren',403,'重命名'],[447,'sep'],[450,'',450,'楼层'],[478,'combo',0,'第6层',62,24],[545,'sep'],[551,'sort',571,'排序'],[597,'drop'],[611,'filter',630,'过滤'],[656,'drop'],[670,'sep'],[675,'cfrom',695,'从其他楼层复制构件'],[810,'cto',830,'复制构件到其他楼层'],[945,'sep'],[953,'',953,'查找'],[981,'drop'],[993,'sep'],[1002,'up',1019,'上移'],[1053,'down',1070,'下移','off']]);
    this.attachShadow({ mode: 'open' }).innerHTML = `<style>
      :host{display:flex;flex-direction:column;height:768px;width:1366px;position:relative;overflow:hidden;font:12px/16px ${FONT};color:#111}
      .main{flex:1;display:flex;min-height:0;background:#f0f0f0}
      .rt{flex:1;margin-left:5px;display:flex;flex-direction:column;min-width:0}
      .rb{height:28px;flex:none}
      .rb gl-seg{width:100%;height:28px;padding-bottom:2px}
      .lo{flex:1;display:flex;min-height:0;gap:4px}
    </style>
    <gl-titlebar></gl-titlebar>
    <gl-menubar></gl-menubar>
    <gl-toolbar></gl-toolbar>
    <div class="main">
      <gl-nav></gl-nav>
      <div class="rt">
        <div class="rb"><gl-seg>${row}</gl-seg></div>
        <div class="lo"><gl-list></gl-list><gl-props></gl-props></div>
      </div>
    </div>
    <gl-status></gl-status>
    <gl-taskbar></gl-taskbar>
    <gl-badge></gl-badge>
    <gl-ime></gl-ime>`;
  }
}

customElements.define('gl-icon', GlIcon);
customElements.define('gl-tool', GlTool);
customElements.define('gl-seg', GlSeg);
customElements.define('gl-titlebar', GlTitlebar);
customElements.define('gl-menubar', GlMenubar);
customElements.define('gl-toolbar', GlToolbar);
customElements.define('gl-nav-btn', GlNavBtn);
customElements.define('gl-tree-row', GlTreeRow);
customElements.define('gl-nav', GlNav);
customElements.define('gl-list-row', GlListRow);
customElements.define('gl-list', GlList);
customElements.define('gl-canvas', GlCanvas);
customElements.define('gl-dialog', GlDialog);
customElements.define('gl-props', GlProps);
customElements.define('gl-status', GlStatus);
customElements.define('gl-taskbar', GlTaskbar);
customElements.define('gl-ime', GlIme);
customElements.define('gl-badge', GlBadge);
customElements.define('gl-app', GlApp);
</script>
</body>
</html>
